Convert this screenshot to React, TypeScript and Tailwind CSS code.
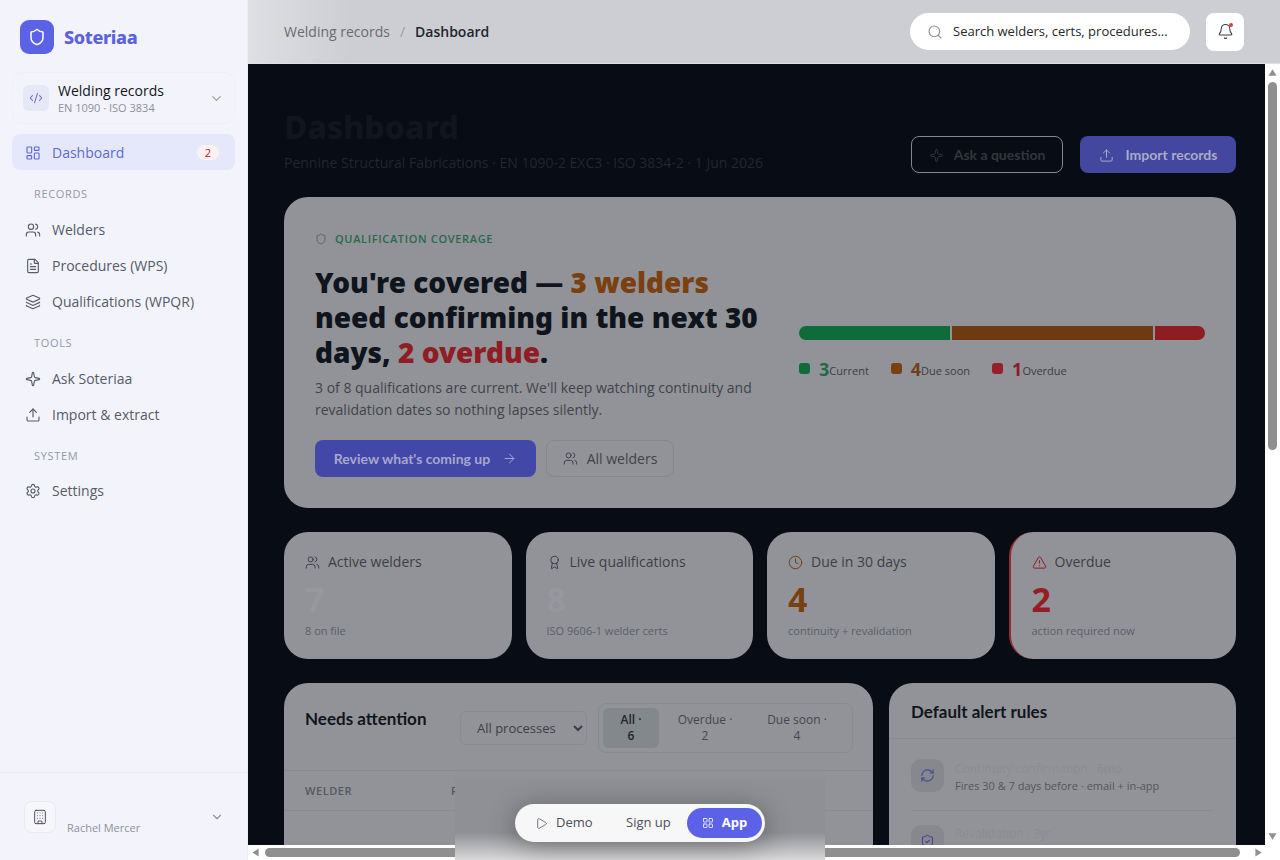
import {
  ArrowRight,
  Award,
  Bell,
  Building,
  ChevronDown,
  Clock,
  CodeXml,
  FileText,
  Layers,
  LayoutDashboard,
  LayoutGrid,
  Play,
  RefreshCw,
  Search,
  Settings,
  Shield,
  ShieldCheck,
  Sparkle,
  TriangleAlert,
  Upload,
  Users,
} from "lucide-react";

function NavItem({ icon: Icon, label }: { icon: typeof Users; label: string }) {
  return (
    <div className="flex h-9 items-center gap-[11px] px-[13px] text-sm font-medium text-[#555b68]">
      <Icon size={16} strokeWidth={1.7} />
      <span>{label}</span>
    </div>
  );
}

function SectionLabel({ children }: { children: string }) {
  return (
    <div className="flex h-[22px] items-center px-[22px] text-[11px] font-medium tracking-[0.06em] text-[#9299a8]">
      {children}
    </div>
  );
}

function Sidebar() {
  return (
    <aside className="flex h-full w-[248px] shrink-0 flex-col border-r border-[#e9ebf5] bg-[#f3f4fb]">
      <div className="flex items-center gap-[10px] px-5 pt-5">
        <div className="flex h-[34px] w-[34px] items-center justify-center rounded-[9px] bg-[#5b62e8]">
          <Shield size={18} strokeWidth={2} className="text-white" />
        </div>
        <span className="font-['Noto_Sans',sans-serif] text-[18px] font-extrabold tracking-[-0.02em] text-[#5b62de]">Soteriaa</span>
      </div>
      <div className="mx-3 mt-[18px] flex h-[52px] items-center rounded-[10px] border border-[#eeeff7] px-[10px]">
        <div className="flex h-[26px] w-[26px] items-center justify-center rounded-md bg-[#e6e8f8]">
          <CodeXml size={14} strokeWidth={1.8} className="text-[#6a70c8]" />
        </div>
        <div className="ml-[9px] flex-1">
          <div className="text-sm leading-[18px] font-medium text-[#12151d]">Welding records</div>
          <div className="text-[11px] leading-[15px] text-[#8b909c]">EN 1090 · ISO 3834</div>
        </div>
        <ChevronDown size={15} className="text-[#9a9fad]" />
      </div>
      <div className="mx-3 mt-[10px] flex h-9 items-center rounded-lg bg-[#e5e8fa] px-[13px] pt-[1px] text-sm font-medium text-[#5f68d6]">
        <LayoutDashboard size={16} strokeWidth={1.7} />
        <span className="ml-[11px] flex-1">Dashboard</span>
        <span className="mr-[3px] flex h-[15px] w-[22px] items-center justify-center rounded-full bg-[#fdf1f2] text-[11px] text-[#b4232c]">
          2
        </span>
      </div>
      <div className="mx-3 mt-[13px]">
        <SectionLabel>RECORDS</SectionLabel>
        <div className="mt-[7px]" />
        <NavItem icon={Users} label="Welders" />
        <NavItem icon={FileText} label="Procedures (WPS)" />
        <NavItem icon={Layers} label="Qualifications (WPQR)" />
        <div className="mt-[12px]" />
        <SectionLabel>TOOLS</SectionLabel>
        <div className="mt-[7px]" />
        <NavItem icon={Sparkle} label="Ask Soteriaa" />
        <NavItem icon={Upload} label="Import & extract" />
        <div className="mt-[12px]" />
        <SectionLabel>SYSTEM</SectionLabel>
        <div className="mt-[6px]" />
        <NavItem icon={Settings} label="Settings" />
      </div>
      <div className="mt-auto flex h-[88px] items-center border-t border-[#e9ebf5] px-6">
        <div className="flex h-8 w-8 items-center justify-center rounded-lg border border-[#e8e9f1] bg-[#f7f7fb]">
          <Building size={16} strokeWidth={1.5} className="text-[#4b505b]" />
        </div>
        <span className="mt-6 ml-[11px] flex-1 text-[11px] text-[#8d919d]">Rachel Mercer</span>
        <ChevronDown size={14} className="mr-[-1px] text-[#8d919d]" />
      </div>
    </aside>
  );
}

function Topbar() {
  return (
    <header className="flex h-16 shrink-0 items-center border-b border-[#dfe0e4] bg-gradient-to-r from-[#dedfe3] via-[#cdced3] via-10% to-[#cdced3] pr-9 pl-9">
      <span className="text-sm text-[#686b73]">Welding records</span>
      <span className="mx-[10px] text-sm text-[#9a9ca3]">/</span>
      <span className="text-sm font-semibold text-[#22252c]">Dashboard</span>
      <div className="ml-auto flex h-[37px] w-[280px] items-center rounded-full bg-white pl-[17px]">
        <Search size={16} strokeWidth={1.6} className="text-[#8c8f96]" />
        <span className="mt-[1px] ml-[10px] text-[13px] text-[#24272e]">Search welders, certs, procedures...</span>
      </div>
      <div className="relative ml-4 flex h-[38px] w-[38px] items-center justify-center rounded-lg bg-white">
        <Bell size={17} strokeWidth={1.5} className="text-[#3d4048]" />
        <span className="absolute top-[10px] right-[11px] h-[4px] w-[4px] rounded-full bg-[#d83a4a]" />
      </div>
    </header>
  );
}

function StatCard({
  icon: Icon,
  iconColor,
  label,
  value,
  valueColor,
  sub,
  danger,
}: {
  icon: typeof Users;
  iconColor: string;
  label: string;
  value: string;
  valueColor: string;
  sub: string;
  danger?: boolean;
}) {
  return (
    <div className={"h-[127px] rounded-3xl bg-[#929398] px-[21px] pt-[20px] " + (danger ? "border-l-2 border-[#9c2a30]" : "")}>
      <div className="flex h-5 items-center gap-[8px] text-sm font-medium text-[#3c3f47]">
        <Icon size={15} strokeWidth={1.6} className={iconColor} />
        <span>{label}</span>
      </div>
      <div className={"mt-[8px] text-[34px] leading-[38px] font-bold " + valueColor}>{value}</div>
      <div className="mt-[5px] text-[11px] leading-[15px] text-[#5b5f68]">{sub}</div>
    </div>
  );
}

function Legend({ box, num, numColor, label }: { box: string; num: string; numColor: string; label: string }) {
  return (
    <div className="flex items-end">
      <span className={"mr-[9px] mb-[5px] h-[11px] w-[11px] rounded-[3px] " + box} />
      <span className={"text-lg leading-5 font-bold " + numColor}>{num}</span>
      <span className="text-[11px] leading-[16px] text-[#3a3d45]">{label}</span>
    </div>
  );
}

function Hero() {
  return (
    <section className="flex h-[311px] rounded-3xl bg-[#929398] pt-[34px] pl-[31px]">
      <div className="w-[452px] shrink-0">
        <div className="flex h-4 items-center gap-2 text-[11px] font-semibold tracking-[0.06em] text-[#28694b]">
          <Shield size={12} strokeWidth={1.7} className="text-[#565b60]" />
          <span>QUALIFICATION COVERAGE</span>
        </div>
        <h1 className="mt-[18px] font-['Noto_Sans',sans-serif] text-[28px] leading-[35px] font-black text-[#10141c]">
          You're covered — <span className="text-[#7a400f]">3 welders</span> need confirming in the next 30 days,{" "}
          <span className="text-[#8f1d24]">2 overdue</span>.
        </h1>
        <p className="mt-[7px] text-sm leading-[22px] text-[#3f434a]">
          3 of 8 qualifications are current. We'll keep watching continuity and revalidation dates so nothing lapses
          silently.
        </p>
        <div className="mt-[19px] flex gap-[10px]">
          <button className="flex h-[37px] w-[221px] items-center justify-center gap-[12px] rounded-lg bg-[#4347a8] font-['Lato',sans-serif] text-sm font-bold text-[#a6a8cc]">
            Review what's coming up
            <ArrowRight size={15} strokeWidth={1.6} />
          </button>
          <button className="flex h-[37px] w-[128px] items-center justify-center gap-[9px] rounded-lg border border-[#85878c] text-sm font-medium text-[#3f434a]">
            <Users size={15} strokeWidth={1.6} />
            All welders
          </button>
        </div>
      </div>
      <div className="mt-[95px] ml-[32px] w-[406px]">
        <div className="flex h-[14px] w-full gap-[2px] overflow-hidden rounded-full">
          <div className="w-[151px] bg-[#0f6b3a]" />
          <div className="w-[201px] bg-[#6e3a12]" />
          <div className="flex-1 bg-[#8e1d22]" />
        </div>
        <div className="mt-[19px] flex gap-[22px]">
          <Legend box="bg-[#0f6b3a]" num="3" numColor="text-[#1c6a46]" label="Current" />
          <Legend box="bg-[#7a400f]" num="4" numColor="text-[#70401a]" label="Due soon" />
          <Legend box="bg-[#96202a]" num="1" numColor="text-[#8a1c2c]" label="Overdue" />
        </div>
      </div>
    </section>
  );
}

function AttentionCard() {
  return (
    <section className="flex-1 rounded-3xl bg-[#929398]">
      <div className="flex h-[88px] items-start border-b border-[#8a8b90] pt-[21px] pl-[21px]">
        <h2 className="w-[155px] font-['Lato',sans-serif] text-[17px] leading-[30px] font-bold text-[#11151c]">
          Needs attention
        </h2>
        <select className="mt-[7px] h-[34px] w-[127px] rounded-md border border-[#8a8b90] bg-transparent pl-3 text-[13px] text-[#3c3f47]">
          <option>All processes</option>
        </select>
        <div className="mt-[-1px] ml-[11px] flex h-[50px] w-[255px] rounded-lg border border-[#8a8b90] p-1 text-center text-[12px] leading-4">
          <div className="flex w-[56px] flex-col justify-center rounded-md bg-[#83888c] font-semibold text-[#22252c]">
            <span>All ·</span>
            <span>6</span>
          </div>
          <div className="flex w-[92px] flex-col justify-center font-medium text-[#44474e]">
            <span>Overdue ·</span>
            <span>2</span>
          </div>
          <div className="flex w-[92px] flex-col justify-center font-medium text-[#44474e]">
            <span>Due soon ·</span>
            <span>4</span>
          </div>
        </div>
      </div>
      <div className="flex h-10 items-center border-b border-[#8a8b90] pt-[2px] pl-[21px] text-[11px] font-semibold tracking-[0.05em] text-[#54585f]">
        <span className="w-[146px]">WELDER</span>
        <span>PROCESS</span>
      </div>
    </section>
  );
}

function RulesCard() {
  return (
    <section className="w-[347px] shrink-0 rounded-3xl bg-[#929398]">
      <div className="flex h-[56px] items-center border-b border-[#8a8b90] pt-[2px] pl-[22px] font-['Lato',sans-serif] text-[17px] font-bold text-[#11151c]">
        Default alert rules
      </div>
      <div className="mx-[22px] flex items-start gap-[11px] border-b border-[#8a8b90] pt-[20px] pb-[15px]">
        <div className="flex h-[33px] w-[33px] items-center justify-center rounded-[10px] bg-[#86888e]">
          <RefreshCw size={15} strokeWidth={1.7} className="text-[#44479a]" />
        </div>
        <div className="pt-[2px]">
          <div className="text-[12px] leading-4 font-medium text-[#8b8c91]">Continuity confirmation · 6mo</div>
          <div className="text-[11px] leading-[18px] text-[#52565d]">Fires 30 & 7 days before · email + in-app</div>
        </div>
      </div>
      <div className="mx-[22px] flex items-start gap-[11px] pt-[14px]">
        <div className="flex h-[33px] w-[33px] items-center justify-center rounded-[10px] bg-[#86888e]">
          <ShieldCheck size={15} strokeWidth={1.7} className="text-[#44479a]" />
        </div>
        <div className="pt-[1px] text-[12px] leading-4 font-medium text-[#8b8c91]">Revalidation · 3yr</div>
      </div>
    </section>
  );
}

function ModeSwitcher() {
  return (
    <div className="absolute right-[455px] bottom-0 left-[207px] flex h-[90px] justify-center bg-[linear-gradient(to_bottom,transparent_0%,#8f9095_15%,#8f9095_70%,#d8d8d8_100%)]">
      <div className="mt-[34px] flex h-[38px] w-[250px] items-center rounded-full bg-[#f7f7f8] pl-[20px] text-[13px] font-medium whitespace-nowrap text-[#4d505a] shadow-[0_4px_28px_rgba(0,0,0,0.35)]">
        <Play size={13} strokeWidth={1.4} />
        <span className="ml-2 w-[70px]">Demo</span>
        <span className="w-[61px]">Sign up</span>
        <div className="flex h-[30px] w-[75px] items-center justify-center gap-2 rounded-full bg-[#5b62e8] font-bold text-white">
          <LayoutGrid size={12} strokeWidth={1.6} />
          <span>App</span>
        </div>
      </div>
    </div>
  );
}

function ScrollArrow({ rotate }: { rotate: string }) {
  return (
    <svg width="9" height="9" viewBox="0 0 10 10" className={"shrink-0 text-[#8f8f8f] " + rotate}>
      <path d="M5 1.5 9.5 8.5H.5Z" fill="currentColor" />
    </svg>
  );
}

function VerticalBar() {
  return (
    <div className="flex w-[15px] shrink-0 flex-col items-center bg-white pt-[4px] pb-[4px]">
      <ScrollArrow rotate="" />
      <div className="mt-[5px] h-[368px] w-[9px] rounded-full bg-[#8f8f8f]" />
      <div className="flex-1" />
      <ScrollArrow rotate="rotate-180" />
    </div>
  );
}

function HorizontalBar() {
  return (
    <div className="flex h-[15px] shrink-0 items-center bg-white pl-[3px]">
      <ScrollArrow rotate="-rotate-90" />
      <div className="ml-[5px] h-[9px] w-[975px] rounded-full bg-[#8f8f8f]" />
      <div className="ml-[14px]">
        <ScrollArrow rotate="rotate-90" />
      </div>
    </div>
  );
}

export default function App() {
  return (
    <div className="flex h-screen w-full overflow-hidden bg-white font-['Open_Sans',sans-serif]">
      <Sidebar />
      <div className="relative flex min-w-0 flex-1 flex-col">
        <Topbar />
        <div className="flex min-h-0 flex-1">
          <main className="min-w-0 flex-1 overflow-hidden bg-[#080c14]">
            <div className="w-[1024px] px-9 pt-[36px] pb-9">
              <div className="flex h-[97px] items-start">
                <div>
                  <div className="font-['Noto_Sans',sans-serif] text-[32px] leading-[54px] font-extrabold text-[#11151d]">Dashboard</div>
                  <div className="pt-[1px] text-sm leading-[16px] text-[#22262d]">
                    Pennine Structural Fabrications · EN 1090-2 EXC3 · ISO 3834-2 · 1 Jun 2026
                  </div>
                </div>
                <div className="mt-9 ml-auto flex gap-[17px] font-['Lato',sans-serif]">
                  <button className="flex h-[37px] w-[152px] items-center justify-center gap-[10px] rounded-lg border border-[#85878c] pt-[1px] text-sm font-bold text-[#33363c]">
                    <Sparkle size={15} strokeWidth={1.5} />
                    Ask a question
                  </button>
                  <button className="flex h-[37px] w-[156px] items-center justify-center gap-[12px] rounded-lg bg-[#43479f] pt-[1px] text-sm font-bold text-[#a9abc8]">
                    <Upload size={15} strokeWidth={1.6} />
                    Import records
                  </button>
                </div>
              </div>
              <Hero />
              <div className="mt-6 grid grid-cols-4 gap-[14px]">
                <StatCard icon={Users} iconColor="text-[#3c3f47]" label="Active welders" value="7" valueColor="text-[#97989d]" sub="8 on file" />
                <StatCard icon={Award} iconColor="text-[#3c3f47]" label="Live qualifications" value="8" valueColor="text-[#97989d]" sub="ISO 9606-1 welder certs" />
                <StatCard icon={Clock} iconColor="text-[#72401a]" label="Due in 30 days" value="4" valueColor="text-[#78400f]" sub="continuity + revalidation" />
                <StatCard icon={TriangleAlert} iconColor="text-[#8e1d2a]" label="Overdue" value="2" valueColor="text-[#951d24]" sub="action required now" danger />
              </div>
              <div className="mt-6 flex h-[935px] gap-4">
                <AttentionCard />
                <RulesCard />
              </div>
            </div>
          </main>
          <VerticalBar />
        </div>
        <HorizontalBar />
        <ModeSwitcher />
      </div>
    </div>
  );
}
